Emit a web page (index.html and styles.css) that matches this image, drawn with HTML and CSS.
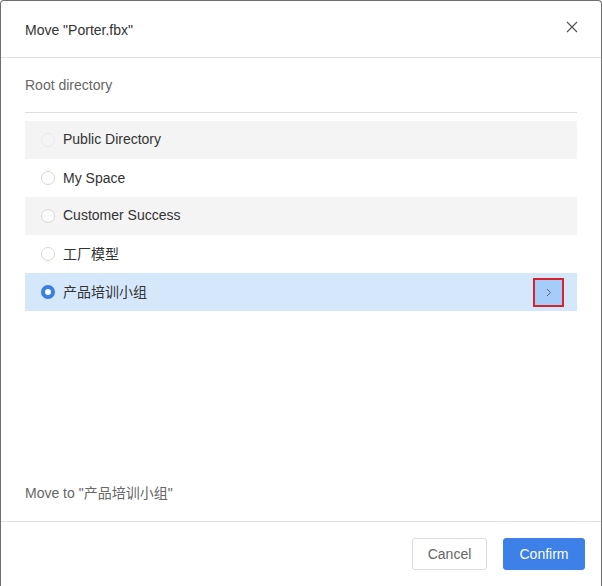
FILE: index.html
```html
<!DOCTYPE html>
<html lang="en">
<head>
<meta charset="utf-8">
<title>Move</title>
<link rel="stylesheet" href="styles.css">
</head>
<body>
<div class="dialog">
  <div class="header">
    <div class="title">Move "Porter.fbx"</div>
    <button class="close" aria-label="Close">
      <svg width="12" height="12" viewBox="0 0 12 12"><path d="M1 1L11 11M11 1L1 11" stroke="#555" stroke-width="1.2" fill="none"/></svg>
    </button>
  </div>
  <div class="body">
    <div class="crumb">Root directory</div>
    <div class="list">
      <div class="row shaded"><span class="radio disabled"></span><span class="label">Public Directory</span></div>
      <div class="row"><span class="radio"></span><span class="label">My Space</span></div>
      <div class="row shaded"><span class="radio"></span><span class="label">Customer Success</span></div>
      <div class="row"><span class="radio"></span><span class="label">工厂模型</span></div>
      <div class="row selected"><span class="radio checked"></span><span class="label">产品培训小组</span>
        <button class="enter" aria-label="Open">
          <svg width="6" height="9" viewBox="0 0 6 9"><path d="M1 1L4.5 4.5L1 8" stroke="#666" stroke-width="1" fill="none"/></svg>
        </button>
      </div>
    </div>
    <div class="target">Move to "产品培训小组"</div>
  </div>
  <div class="footer">
    <button class="btn cancel">Cancel</button>
    <button class="btn confirm">Confirm</button>
  </div>
</div>
</body>
</html>
```
FILE: styles.css
```css
html, body {
  margin: 0;
  padding: 0;
  background: #ffffff;
}
body {
  font-family: "Liberation Sans", "Noto Sans CJK SC", Arial, sans-serif;
  font-size: 14px;
  color: #333;
}
.dialog {
  box-sizing: border-box;
  width: 602px;
  height: 586px;
  border: 1px solid #6e6e6e;
  border-bottom: none;
  border-radius: 4px 4px 0 0;
  display: flex;
  flex-direction: column;
  background: #fff;
}
.header {
  height: 56px;
  border-bottom: 1px solid #e3e3e3;
  display: flex;
  align-items: center;
  justify-content: space-between;
  padding: 0 23px 0 24px;
}
.title {
  font-size: 14px;
  color: #333;
  padding-top: 1px;
}
.close {
  border: none;
  background: none;
  padding: 0;
  width: 12px;
  height: 12px;
  display: flex;
  margin-top: -4px;
}
.body {
  flex: 1;
  display: flex;
  flex-direction: column;
  padding: 0 24px;
}
.crumb {
  height: 54px;
  line-height: 54px;
  color: #666;
  border-bottom: 1px solid #dedede;
}
.list {
  margin-top: 8px;
  display: flex;
  flex-direction: column;
}
.row {
  height: 38px;
  display: flex;
  align-items: center;
  padding-left: 16px;
  padding-right: 13px;
}
.row.shaded { background: #f4f4f4; }
.row.selected { background: #d5e8fb; }
.row.shaded .label { margin-top: -3px; }
.radio {
  box-sizing: border-box;
  width: 14px;
  height: 14px;
  border-radius: 50%;
  border: 1px solid #d6d6d6;
  background: #fff;
  margin-right: 8px;
  flex: none;
}
.radio.disabled {
  border-color: #ebebeb;
  background: #f4f4f4;
}
.radio.checked {
  border: 4px solid #3a7ee6;
  background: #fff;
}
.label {
  flex: 1;
  line-height: 20px;
}
.enter {
  box-sizing: border-box;
  width: 31px;
  height: 29px;
  border: 2px solid #d7232b;
  background: #a6cdfa;
  display: flex;
  align-items: center;
  justify-content: center;
  padding: 0;
}
.target {
  margin-top: auto;
  height: 40px;
  line-height: 40px;
  margin-bottom: 8px;
  color: #666;
}
.footer {
  height: 64px;
  border-top: 1px solid #e3e3e3;
  display: flex;
  align-items: center;
  justify-content: flex-end;
  gap: 16px;
  padding: 0 16px 0 0;
}
.btn {
  height: 32px;
  font-family: "Liberation Sans", Arial, sans-serif;
  font-size: 14px;
  border-radius: 3px;
  padding: 0;
}
.cancel {
  width: 75px;
  background: #fff;
  border: 1px solid #dcdcdc;
  color: #666;
}
.confirm {
  width: 82px;
  background: #3c80e8;
  border: 1px solid #3c80e8;
  color: #fff;
}
```
